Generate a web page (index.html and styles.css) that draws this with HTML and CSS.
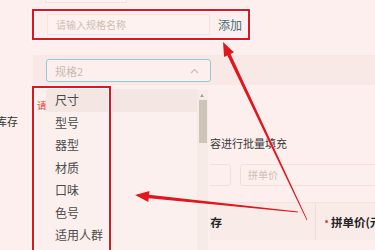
FILE: index.html
```html
<!DOCTYPE html>
<html lang="zh-CN">
<head>
    <meta charset="UTF-8">
    <meta name="viewport" content="width=device-width, initial-scale=1.0">
    <title>规格设置</title>
    <link rel="stylesheet" href="styles.css">
</head>
<body>
    <div class="page">
        <div class="stub"></div>

        <div class="name-row">
            <div class="name-input">请输入规格名称</div>
            <a class="add-btn">添加</a>
        </div>

        <div class="select-band">
            <div class="select">
                <span>规格2</span>
                <svg class="chevron" width="9" height="6" viewBox="0 0 9 6"><path d="M1 5 L4.5 1.5 L8 5" fill="none" stroke="#cbbfb7" stroke-width="1.2"/></svg>
            </div>
        </div>

        <div class="form">
            <div class="tip">请先选择规格值</div>
            <div class="stock-label">库存</div>
            <div class="batch">规格内容进行批量填充</div>
            <div class="inputs">
                <div class="field field-left">库存</div>
                <div class="field field-right">拼单价</div>
            </div>
            <div class="table-head">
                <div class="th th-first">库存</div>
                <div class="th th-price"><i></i>拼单价(元)</div>
            </div>
        </div>

        <!-- open select menu -->
        <div class="dropdown">
            <div class="opt active">尺寸</div>
            <div class="opt">型号</div>
            <div class="opt">器型</div>
            <div class="opt">材质</div>
            <div class="opt">口味</div>
            <div class="opt">色号</div>
            <div class="opt">适用人群</div>
            <div class="scrollbar">
                <span class="up"></span>
                <span class="thumb"></span>
            </div>
        </div>

        <!-- annotations -->
        <div class="mark mark-name"></div>
        <div class="mark mark-list"></div>
        <svg class="arrows" width="375" height="250" viewBox="0 0 375 250">
            <polygon points="223,42 224.01,57.01 227.35,55.43 306.64,220.17 307.36,219.83 230.61,53.89 233.95,52.31"/>
            <polygon points="135,195 148.35,201.92 148.73,198.24 297.96,212.4 298.04,211.6 149.11,194.66 149.49,190.98"/>
        </svg>
    </div>
</body>
</html>
```

FILE: styles.css
```css
* { margin: 0; padding: 0; box-sizing: border-box; }
body {
    background: #fcefed;
    font-family: "Noto Sans CJK SC", "Noto Sans", sans-serif;
    color: #3a3a3a;
}
.page {
    position: relative;
    width: 375px;
    height: 250px;
    overflow: hidden;
}
.stub {
    margin-left: 45px;
    width: 82px;
    height: 3px;
    background: #fdf3f1;
    border: 1px solid #f2e2dc;
    border-top: none;
}

.name-row {
    display: flex;
    align-items: center;
    margin-top: 11px;
    padding-left: 47px;
}
.name-input {
    width: 163px;
    height: 21px;
    padding-left: 8px;
    font-size: 10px;
    line-height: 19px;
    color: #cdbdb4;
    background: #fdf2ef;
    border: 1px solid #f3e3dc;
}
.add-btn {
    margin-left: 8px;
    font-size: 12px;
    color: #3f6f79;
}

.select-band {
    margin: 20px 0 0 33px;
    height: 30px;
    padding: 4px 0 0 13px;
    background: #f8e9e6;
}
.select {
    display: flex;
    align-items: center;
    justify-content: space-between;
    width: 165px;
    height: 23px;
    padding: 0 11px 0 8px;
    border: 1px solid #8fcad5;
    border-radius: 3px;
    background: #fcefed;
    font-size: 11px;
    color: #c8bab0;
}

.form { font-size: 11px; line-height: 14px; }
.tip { margin: 13px 0 0 37px; font-size: 9.5px; color: #e0443e; white-space: nowrap; }
.stock-label { margin: 2px 0 0 -4px; color: #333; }
.batch { margin-top: 8px; padding-left: 177px; color: #3a3a3a; white-space: nowrap; }
.inputs {
    display: flex;
    gap: 9px;
    margin-top: 14px;
    padding-left: 130px;
}
.field {
    flex-shrink: 0;
    height: 22px;
    padding-left: 7px;
    font-size: 10px;
    line-height: 20px;
    color: #cdbfb6;
    background: #fcf0ee;
    border: 1px solid #f1e1da;
    border-radius: 3px;
}
.field-left { width: 101px; }
.field-right { width: 150px; }
.table-head {
    display: flex;
    margin: 16px 0 0 130px;
    height: 38px;
    background: #f8ebe8;
    border-top: 1px solid #f2e3de;
    font-weight: bold;
    font-size: 11.5px;
    color: #222;
}
.th { display: flex; align-items: center; white-space: nowrap; flex-shrink: 0; }
.th-first { width: 186px; padding-left: 69px; border-right: 1px solid #f0dfd9; }
.th-price { padding-left: 9px; }
.th-price i {
    width: 3px;
    height: 3px;
    margin-right: 3px;
    border-radius: 50%;
    background: #e0443e;
}

.dropdown {
    position: absolute;
    left: 46px;
    top: 88px;
    width: 164px;
    height: 175px;
    padding-top: 1px;
    background: #fcf0ee;
}
.opt {
    width: 151px;
    height: 22.5px;
    padding-left: 9px;
    font-size: 12px;
    line-height: 22.5px;
    color: #4a4a4a;
}
.opt.active { background: #f4e6e3; }
.scrollbar {
    position: absolute;
    top: 2px;
    right: 2px;
    width: 11px;
    height: 170px;
    background: #f7ebe8;
}
.scrollbar .up {
    position: absolute;
    left: 3px;
    top: 4px;
    border: 2.5px solid transparent;
    border-bottom: 3px solid #a9a09a;
    border-top: none;
}
.scrollbar .thumb {
    position: absolute;
    left: 2px;
    top: 10px;
    width: 8px;
    height: 43px;
    background: #cec5b9;
}

.mark {
    position: absolute;
    border: 2.5px solid #e1141c;
    box-shadow: 0 0 0 1px #fff, inset 0 0 0 1px #fff;
}
.mark-name { left: 32px; top: 9px; width: 218px; height: 31px; }
.mark-list { left: 32px; top: 86px; width: 79px; height: 180px; }
.arrows { position: absolute; left: 0; top: 0; }
.arrows polygon { fill: #e3161e; stroke: #fff; stroke-width: 0.8; paint-order: stroke; }
```
